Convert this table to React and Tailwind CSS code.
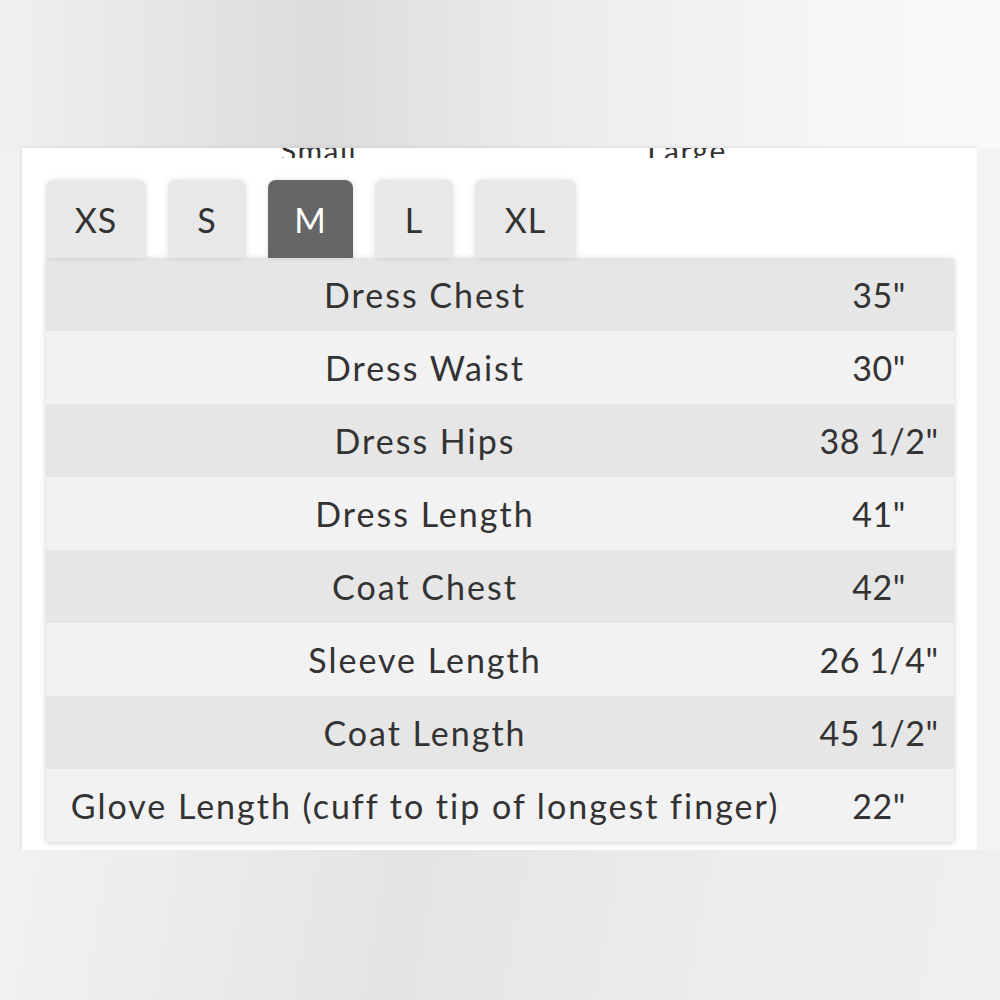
const sizes = [
  { label: "XS", w: "w-[100px]" },
  { label: "S", w: "w-[78px]" },
  { label: "M", w: "w-[85px]", active: true },
  { label: "L", w: "w-[78px]" },
  { label: "XL", w: "w-[101px]" },
];

const rows = [
  ["Dress Chest", '35"'],
  ["Dress Waist", '30"'],
  ["Dress Hips", '38 1/2"'],
  ["Dress Length", '41"'],
  ["Coat Chest", '42"'],
  ["Sleeve Length", '26 1/4"'],
  ["Coat Length", '45 1/2"'],
  ["Glove Length (cuff to tip of longest finger)", '22"'],
];

const App = () => {
  return (
    <div className="w-[1000px] h-[1000px] flex flex-col overflow-hidden font-['Lato',sans-serif] text-[#333]">
      <div className="h-[148px] bg-[linear-gradient(90deg,#f0f0f0_0%,#dcdcdc_32%,#ececec_55%,#f7f7f7_85%,#f9f9f9_100%)]" />
      <div className="flex h-[702px]">
        <div className="w-[22px] bg-[#f1f1f1]" />
        <div className="w-[955px] bg-white shadow-[0_0_4px_rgba(0,0,0,0.12)] pl-[24px]">
          <div className="h-[10px] overflow-hidden flex text-[30px] leading-none tracking-[1.5px]">
            <span className="ml-[234px] -mt-[13px]">Small</span>
            <span className="ml-[290px] -mt-[13px]">Large</span>
          </div>
          <div className="flex mt-[22px] gap-[22px]">
            {sizes.map((s) => (
              <div
                key={s.label}
                className={`${s.w} h-[78px] rounded-t-[8px] flex items-center justify-center text-[34px] tracking-[1px] shadow-[0_0_6px_rgba(0,0,0,0.12)] ${
                  s.active ? "bg-[#666] text-white" : "bg-[#e8e8e8]"
                }`}
              >
                {s.label}
              </div>
            ))}
          </div>
          <div className="w-[908px] shadow-[0_1px_6px_rgba(0,0,0,0.18)]">
            {rows.map(([name, val], i) => (
              <div
                key={name}
                className={`flex h-[73px] items-center text-[34px] tracking-[2px] ${i % 2 === 0 ? "bg-[#e6e6e6]" : "bg-[#f2f2f2]"}`}
              >
                <div className="w-[758px] text-center">{name}</div>
                <div className="flex-1 text-center tracking-[0.5px]">{val}</div>
              </div>
            ))}
          </div>
        </div>
        <div className="flex-1 bg-[#f3f3f3]" />
      </div>
      <div className="flex-1 bg-[linear-gradient(100deg,#f2f2f2_0%,#e4e4e4_40%,#ececec_70%,#efefef_100%)]" />
    </div>
  );
};

export default App;
